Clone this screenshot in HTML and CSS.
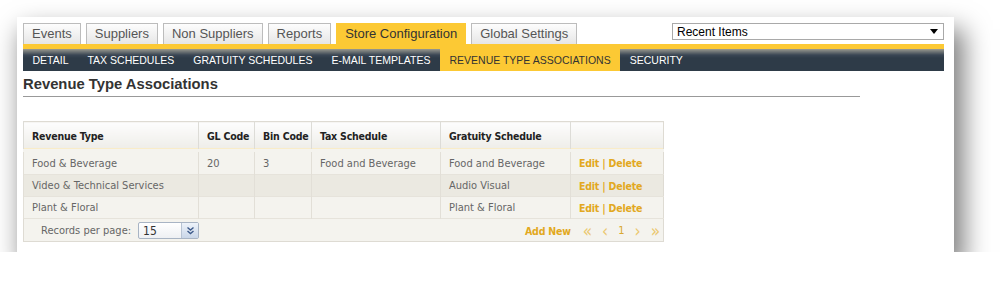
FILE: index.html
```html
<!DOCTYPE html>
<html lang="en">

<head>
    <meta charset="UTF-8">
    <title>Revenue Type Associations</title>
    <link rel="stylesheet" href="styles.css">
</head>

<body>
    <div class="page">
        <div class="topbar">
            <ul class="tabs">
                <li>Events</li>
                <li>Suppliers</li>
                <li>Non Suppliers</li>
                <li>Reports</li>
                <li class="active">Store Configuration</li>
                <li>Global Settings</li>
            </ul>
            <div class="recent">
                <span>Recent Items</span>
                <i class="caret"></i>
            </div>
        </div>
        <ul class="subnav">
            <li>Detail</li>
            <li>Tax Schedules</li>
            <li>Gratuity Schedules</li>
            <li>E-mail Templates</li>
            <li class="active">Revenue Type Associations</li>
            <li>Security</li>
        </ul>

        <h1 class="title">Revenue Type Associations</h1>

        <table class="grid">
            <colgroup>
                <col class="c1"><col class="c2"><col class="c3"><col class="c4"><col class="c5"><col class="c6">
            </colgroup>
            <thead>
                <tr>
                    <th>Revenue Type</th>
                    <th>GL Code</th>
                    <th>Bin Code</th>
                    <th>Tax Schedule</th>
                    <th>Gratuity Schedule</th>
                    <th></th>
                </tr>
            </thead>
            <tbody>
                <tr>
                    <td>Food &amp; Beverage</td>
                    <td>20</td>
                    <td>3</td>
                    <td>Food and Beverage</td>
                    <td>Food and Beverage</td>
                    <td class="act"><a>Edit</a> | <a>Delete</a></td>
                </tr>
                <tr class="alt">
                    <td>Video &amp; Technical Services</td>
                    <td></td>
                    <td></td>
                    <td></td>
                    <td>Audio Visual</td>
                    <td class="act"><a>Edit</a> | <a>Delete</a></td>
                </tr>
                <tr>
                    <td>Plant &amp; Floral</td>
                    <td></td>
                    <td></td>
                    <td></td>
                    <td>Plant &amp; Floral</td>
                    <td class="act"><a>Edit</a> | <a>Delete</a></td>
                </tr>
            </tbody>
            <tfoot>
                <tr>
                    <td colspan="6">
                        <div class="pager">
                            <div class="perpage">
                                <span>Records per page:</span>
                                <div class="combo">
                                    <span>15</span>
                                    <b class="btn">
                                        <svg width="9" height="9" viewBox="0 0 9 9"><path d="M1.5 1.5 4.5 4 7.5 1.5M1.5 5 4.5 7.5 7.5 5" fill="none" stroke="#3d5a8a" stroke-width="1.4"/></svg>
                                    </b>
                                </div>
                            </div>
                            <div class="paging">
                                <a class="add">Add New</a>
                                <span class="arrow">&laquo;</span>
                                <span class="arrow">&lsaquo;</span>
                                <span class="num">1</span>
                                <span class="arrow">&rsaquo;</span>
                                <span class="arrow">&raquo;</span>
                            </div>
                        </div>
                    </td>
                </tr>
            </tfoot>
        </table>
    </div>
</body>

</html>
```

FILE: styles.css
```css
/* page */
body {
    margin: 0;
    background: #fff;
    font-family: Arial, "Liberation Sans", sans-serif;
}

.page {
    margin: 17px 0 0 17px;
    width: 921px;
    height: 229px;
    padding: 6px 10px 0 6px;
    background: #fff;
    box-shadow: 7px 15px 24px 3px rgba(0, 0, 0, 0.5);
}

/* top tabs */
.topbar {
    display: flex;
    justify-content: space-between;
    align-items: flex-start;
    height: 21px;
}

.tabs {
    display: flex;
    gap: 5px;
    list-style: none;
    margin: 0;
    padding: 0;
}

.tabs li {
    height: 20px;
    line-height: 20px;
    padding: 0 8px;
    font-size: 13px;
    color: #555;
    border: 1px solid #bcbcbc;
    border-bottom: 0;
    background: linear-gradient(#fdfdfd, #e6e6e6);
}

.tabs li.active {
    background: #fcc934;
    border-color: #fcc934;
    color: #333;
    height: 21px;
}

.recent {
    width: 261px;
    height: 15px;
    border: 1px solid #a9a9a9;
    display: flex;
    justify-content: space-between;
    align-items: center;
    padding: 0 5px 0 4px;
    font-size: 12px;
    color: #000;
}

.caret {
    border-left: 4px solid transparent;
    border-right: 4px solid transparent;
    border-top: 5px solid #000;
}

/* sub navigation */
.subnav {
    display: flex;
    list-style: none;
    margin: 0;
    padding: 0;
    height: 27px;
    background: linear-gradient(#fcc934 0, #fcc934 5px, #9a9a90 5px, #3a4654 11px, #2e3b48 14px);
}

.subnav li {
    padding: 5px 9.5px 0;
    line-height: 22px;
    font-size: 10.5px;
    color: #fff;
    text-transform: uppercase;
}

.subnav li.active {
    background: #fcc934;
    color: #333;
}

/* heading */
.title {
    margin: 0;
    width: 837px;
    padding: 6px 0 5px;
    font-size: 14.8px;
    line-height: 14px;
    color: #333;
    border-bottom: 1px solid #999;
}

/* grid */
.grid {
    margin-top: 24px;
    width: 640px;
    border-collapse: collapse;
    table-layout: fixed;
    font-family: "DejaVu Sans Condensed", Tahoma, sans-serif;
    font-size: 11px;
    border: 1px solid #dedbd3;
}

.c1 { width: 175px; }
.c2 { width: 56px; }
.c3 { width: 57px; }
.c4 { width: 129px; }
.c5 { width: 130px; }
.c6 { width: 93px; }

.grid th {
    height: 27px;
    padding: 0 4px 0 8px;
    text-align: left;
    font-size: 10.5px;
    letter-spacing: -0.2px;
    color: #222;
    white-space: nowrap;
    background: linear-gradient(#fdfdfd, #eeede8);
    border-left: 1px solid #dddcd7;
    border-bottom: 2px solid #ebc05a;
    box-shadow: inset 0 -1px 0 #f9ecc8;
}

.grid td {
    height: 21px;
    padding: 0 8px;
    color: #666;
    background: #f4f3ee;
    border-left: 1px solid #e2dfd7;
    border-top: 1px solid #e6e3db;
    white-space: nowrap;
}

.grid tbody tr:first-child td {
    border-top: 3px solid #f4f3ee;
    height: 22px;
}

.grid tr.alt td {
    background: #ebe9e1;
}

.grid .act,
.grid .act a {
    color: #e2a820;
    font-weight: bold;
    font-size: 10.5px;
    letter-spacing: -0.2px;
}

/* pager row */
.grid tfoot td {
    height: 21px;
    padding: 1px 3px 0 17px;
    border-left: 0;
}

.pager {
    display: flex;
    justify-content: space-between;
    align-items: center;
}

.perpage {
    display: flex;
    align-items: center;
    gap: 7px;
}

.combo {
    display: flex;
    width: 59px;
    height: 15px;
    border: 1px solid #a8b4c4;
    border-radius: 2px;
    background: linear-gradient(#fff, #eef0f3);
}

.combo span {
    flex: 1;
    padding-left: 4px;
    line-height: 16px;
    font-size: 12px;
    color: #333;
}

.combo .btn {
    width: 16px;
    display: flex;
    align-items: center;
    justify-content: center;
    border-left: 1px solid #b7c3d3;
    background: linear-gradient(#eef3fa, #c9d6e8);
}

.paging {
    display: flex;
    align-items: center;
    gap: 10px;
    color: #e8c56a;
}

.paging .add {
    color: #e2a820;
    font-weight: bold;
    font-size: 10.5px;
    letter-spacing: -0.2px;
    margin-right: 2px;
}

.paging .arrow {
    font-size: 17px;
    line-height: 14px;
    color: #ebc870;
}

.paging .num {
    color: #d9a830;
}
```
